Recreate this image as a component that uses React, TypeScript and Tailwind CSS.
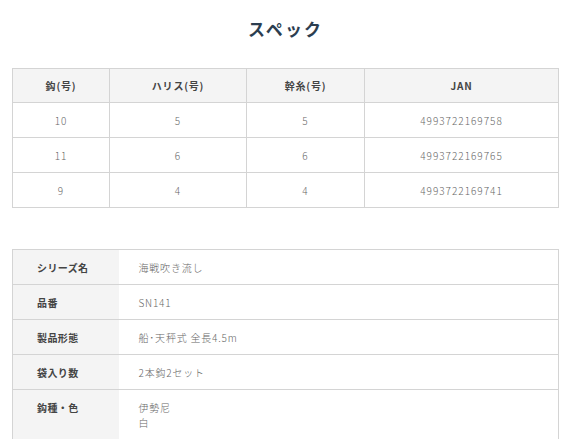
import React from "react";

const font = { fontFamily: '"Noto Sans CJK JP", "Noto Sans", sans-serif' };

const specRows = [
  ["10", "5", "5", "4993722169758"],
  ["11", "6", "6", "4993722169765"],
  ["9", "4", "4", "4993722169741"],
];

const infoRows: [string, string[]][] = [
  ["シリーズ名", ["海戦吹き流し"]],
  ["品番", ["SN141"]],
  ["製品形態", ["船･天秤式 全長4.5m"]],
  ["袋入り数", ["2本鈎2セット"]],
  ["鈎種・色", ["伊勢尼", "白"]],
];

export default function App() {
  return (
    <div className="w-[571px] h-[439px] overflow-hidden bg-white px-3" style={font}>
      <h2 className="pt-[17px] text-center text-[17px] leading-[24px] font-bold tracking-[0.12em] text-[#2c3e50]">
        スペック
      </h2>
      <table className="mt-[27px] w-full table-fixed border-collapse text-[10px] tracking-[0.1em]">
        <colgroup>
          <col className="w-[97px]" />
          <col className="w-[137px]" />
          <col className="w-[118px]" />
          <col />
        </colgroup>
        <thead>
          <tr className="h-[34px] bg-[#f4f4f4]">
            {["鈎(号)", "ハリス(号)", "幹糸(号)", "JAN"].map((h) => (
              <th key={h} className="border border-[#d4d4d4] text-center font-bold tracking-[0.08em] text-[#444]">
                {h}
              </th>
            ))}
          </tr>
        </thead>
        <tbody>
          {specRows.map((r, i) => (
            <tr key={i} className="h-[35px]">
              {r.map((c, j) => (
                <td key={j} className="border border-[#d4d4d4] text-center font-light text-[#666]">
                  {c}
                </td>
              ))}
            </tr>
          ))}
        </tbody>
      </table>

      <table className="mt-[41px] w-full table-fixed border-collapse text-[10px] tracking-[0.08em]">
        <colgroup>
          <col className="w-[106px]" />
          <col />
        </colgroup>
        <tbody>
          {infoRows.map(([k, v]) => (
            <tr key={k} className="border border-[#d4d4d4]">
              <th className="bg-[#f4f4f4] pl-[24px] pt-[10px] pb-[9px] text-left align-top font-bold leading-[15px] tracking-[0.04em] text-[#444]">
                {k}
              </th>
              <td className="pl-[20px] pt-[10px] pb-[9px] text-left align-top font-light leading-[15px] text-[#666]">
                {v.map((line) => (
                  <div key={line}>{line}</div>
                ))}
              </td>
            </tr>
          ))}
        </tbody>
      </table>
    </div>
  );
}
